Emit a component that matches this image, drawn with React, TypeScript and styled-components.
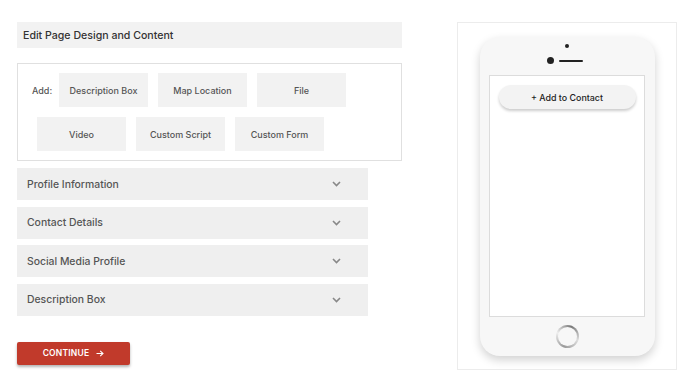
import React from "react";
import styled, { createGlobalStyle } from "styled-components";

const Global = createGlobalStyle`
  html, body { margin: 0; padding: 0; background: #ffffff; }
  body { font-family: "Inter", "Open Sans", sans-serif; color: #444; }
`;

const Page = styled.div`
  display: flex;
  align-items: flex-start;
  gap: 55px;
  padding: 22px 0 0 17px;
`;

const LeftCol = styled.div`
  width: 385px;
  display: flex;
  flex-direction: column;
`;

const HeaderBar = styled.div`
  height: 26px;
  background: #f2f2f2;
  display: flex;
  align-items: center;
  padding-left: 6px;
  font-size: 10.6px;
  font-weight: 500;
  color: #333;
`;

const AddBox = styled.div`
  margin-top: 15px;
  border: 1px solid #e0e0e0;
  padding: 9px 14px;
  display: flex;
  flex-direction: column;
  gap: 10px;
`;

const ButtonRow = styled.div`
  display: flex;
  align-items: center;
`;

const AddLabel = styled.span`
  width: 22px;
  font-size: 9px;
  font-weight: 500;
  color: #555;
`;

const AddButton = styled.button`
  width: 89px;
  height: 34px;
  margin: 0 5px;
  border: none;
  background: #f2f2f2;
  font-family: inherit;
  font-size: 9px;
  font-weight: 500;
  color: #555;
  padding: 0;
`;

const Accordion = styled.div`
  margin-top: 7px;
  width: 351px;
  display: flex;
  flex-direction: column;
  gap: 6.5px;
`;

const AccRow = styled.div`
  height: 32px;
  background: #efefef;
  display: flex;
  align-items: center;
  justify-content: space-between;
  padding: 0 27px 0 10px;
  font-size: 10.4px;
  font-weight: 500;
  color: #555;
`;

const Continue = styled.button`
  margin-top: 26px;
  width: 113px;
  height: 23px;
  border: none;
  border-radius: 2px;
  background: #c13a2b;
  color: #fff;
  font-family: inherit;
  font-size: 8.5px;
  font-weight: 600;
  letter-spacing: 0.2px;
  box-shadow: 0 2px 3px rgba(0, 0, 0, 0.3);
  display: flex;
  align-items: center;
  justify-content: center;
  gap: 7px;
  padding: 0;
`;

const PreviewBox = styled.div`
  width: 220px;
  height: 348px;
  border: 1px solid #ececec;
  display: flex;
  justify-content: center;
  padding-top: 14px;
  box-sizing: border-box;
`;

const Phone = styled.div`
  width: 175px;
  height: 319px;
  border-radius: 20px;
  background: #f7f7f7;
  box-shadow: 0 4px 10px rgba(0, 0, 0, 0.18);
  display: flex;
  flex-direction: column;
  align-items: center;
`;

const TopArea = styled.div`
  height: 38px;
  display: flex;
  flex-direction: column;
  align-items: center;
`;

const SmallCam = styled.div`
  margin-top: 7px;
  width: 4px;
  height: 4px;
  border-radius: 50%;
  background: #222;
`;

const SpeakerRow = styled.div`
  margin-top: 9px;
  margin-left: -4px;
  display: flex;
  align-items: center;
  gap: 5px;
`;

const BigCam = styled.div`
  width: 7px;
  height: 7px;
  border-radius: 50%;
  background: #222;
`;

const Speaker = styled.div`
  width: 24px;
  height: 2px;
  background: #222;
  border-radius: 1px;
`;

const Screen = styled.div`
  width: 156px;
  height: 242px;
  box-sizing: border-box;
  border: 1px solid #dcdcdc;
  background: #fff;
  display: flex;
  flex-direction: column;
  align-items: center;
  padding-top: 9px;
`;

const ContactPill = styled.div`
  width: 137px;
  height: 24px;
  border-radius: 12px;
  background: #f3f3f3;
  box-shadow: 0 2px 3px rgba(0, 0, 0, 0.2);
  display: flex;
  align-items: center;
  justify-content: center;
  font-size: 8.9px;
  font-weight: 500;
  color: #222;
`;

const BottomArea = styled.div`
  flex: 1;
  display: flex;
  align-items: center;
  justify-content: center;
`;

const HomeButton = styled.div`
  width: 23px;
  height: 23px;
  box-sizing: border-box;
  border-radius: 50%;
  padding: 2px;
  background: conic-gradient(from 200deg, #999, #eee, #777, #ddd, #999);
  margin-bottom: 1px;
`;

const HomeInner = styled.div`
  width: 100%;
  height: 100%;
  border-radius: 50%;
  background: #f7f7f7;
`;

const Chevron = () => (
  <svg width="9" height="6" viewBox="0 0 9 6">
    <path d="M1 1 L4.5 4.5 L8 1" fill="none" stroke="#888" strokeWidth="1.6" />
  </svg>
);

const Arrow = () => (
  <svg width="8" height="7" viewBox="0 0 8 7">
    <path d="M0.5 3.5 H7 M4.2 0.8 L7 3.5 L4.2 6.2" fill="none" stroke="#fff" strokeWidth="1.1" />
  </svg>
);

const sections = ["Profile Information", "Contact Details", "Social Media Profile", "Description Box"];

export default function App() {
  return (
    <>
      <Global />
      <Page>
        <LeftCol>
          <HeaderBar>Edit Page Design and Content</HeaderBar>
          <AddBox>
            <ButtonRow>
              <AddLabel>Add:</AddLabel>
              <AddButton>Description Box</AddButton>
              <AddButton>Map Location</AddButton>
              <AddButton>File</AddButton>
            </ButtonRow>
            <ButtonRow>
              <AddButton>Video</AddButton>
              <AddButton>Custom Script</AddButton>
              <AddButton>Custom Form</AddButton>
            </ButtonRow>
          </AddBox>
          <Accordion>
            {sections.map((s) => (
              <AccRow key={s}>
                <span>{s}</span>
                <Chevron />
              </AccRow>
            ))}
          </Accordion>
          <Continue>
            <span>CONTINUE</span>
            <Arrow />
          </Continue>
        </LeftCol>
        <PreviewBox>
          <Phone>
            <TopArea>
              <SmallCam />
              <SpeakerRow>
                <BigCam />
                <Speaker />
              </SpeakerRow>
            </TopArea>
            <Screen>
              <ContactPill>+ Add to Contact</ContactPill>
            </Screen>
            <BottomArea>
              <HomeButton>
                <HomeInner />
              </HomeButton>
            </BottomArea>
          </Phone>
        </PreviewBox>
      </Page>
    </>
  );
}
